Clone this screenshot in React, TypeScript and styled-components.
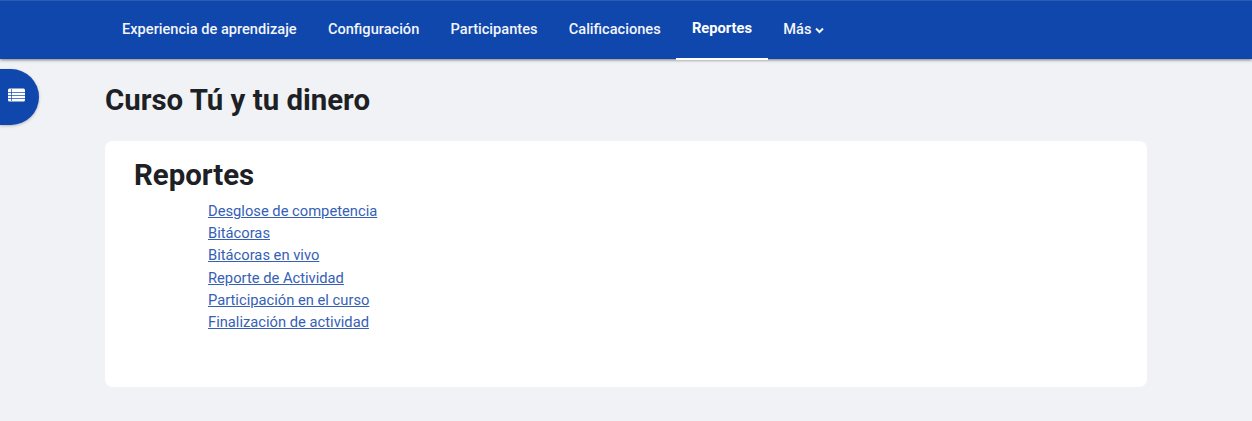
import React from 'react';
import styled, {createGlobalStyle} from 'styled-components';

const GlobalStyle = createGlobalStyle`
  html, body {
    margin: 0;
    padding: 0;
    background: #f1f2f6;
    font-family: Roboto, "Liberation Sans", sans-serif;
    color: #1d2125;
    overflow: hidden;
  }
`;

const Page = styled.div`
  position: relative;
  width: 1252px;
  height: 421px;
  background: #f1f2f6;
`;

const NavBar = styled.nav`
  height: 59px;
  box-sizing: border-box;
  display: flex;
  padding: 1px 0 0 106.4px;
  background: #0f47ad;
  border-top: 1px solid #2c5cb4;
  box-shadow: 0 1px 3px rgba(0, 0, 0, 0.5);
`;

const NavItem = styled.a<{$active?: boolean}>`
  display: flex;
  align-items: center;
  gap: 4px;
  box-sizing: border-box;
  height: 58px;
  padding: 0 15.65px ${p => (p.$active ? '4px' : '2px')};
  font-size: ${p => (p.$active ? '14.7px' : '14.6px')};
  font-weight: ${p => (p.$active ? 700 : 500)};
  color: #fff;
  opacity: ${p => (p.$active ? 1 : 0.95)};
  border-bottom: 2px solid ${p => (p.$active ? '#fff' : 'transparent')};
`;

const Chevron = styled.svg`
  width: 9px;
  height: 7px;
  margin-top: 3px;
`;

const DrawerToggle = styled.button`
  position: absolute;
  left: 0;
  top: 69px;
  width: 39px;
  height: 56px;
  padding: 0 0 4px 8px;
  display: flex;
  align-items: center;
  border: 0;
  border-radius: 0 28px 28px 0;
  background: #0f47ad;
  box-shadow: 0 1px 3px rgba(0, 0, 0, 0.25);
`;

const ListIcon = styled.svg`
  display: block;
  width: 17px;
  height: 14px;
`;

const Main = styled.main`
  width: 1042px;
  margin-left: 105px;
`;

const CourseTitle = styled.h1`
  margin: 0;
  padding-top: 22px;
  height: 60px;
  box-sizing: content-box;
  font-size: 29.4px;
  line-height: 38px;
  font-weight: 700;
`;

const Card = styled.section`
  height: 246px;
  box-sizing: border-box;
  padding: 16px 29px;
  background: #fff;
  border-radius: 8px;
`;

const CardTitle = styled.h2`
  margin: 0 0 7px;
  font-size: 29.4px;
  line-height: 36px;
  font-weight: 700;
`;

const LinkList = styled.ul`
  list-style: none;
  margin: 0;
  padding: 0 0 0 74px;
`;

const ReportLink = styled.a`
  display: block;
  font-size: 14.72px;
  line-height: 22.2px;
  color: #3560b6;
  text-decoration: underline;
`;

const navItems = ['Experiencia de aprendizaje', 'Configuración', 'Participantes', 'Calificaciones'];

const reports = [
  'Desglose de competencia',
  'Bitácoras',
  'Bitácoras en vivo',
  'Reporte de Actividad',
  'Participación en el curso',
  'Finalización de actividad',
];

export default function App() {
  return (
    <Page>
      <GlobalStyle />
      <NavBar>
        {navItems.map(item => (
          <NavItem key={item}>{item}</NavItem>
        ))}
        <NavItem $active>Reportes</NavItem>
        <NavItem>
          Más
          <Chevron viewBox="0 0 9 7">
            <path d="M1 1.5 L4.5 5 L8 1.5" fill="none" stroke="#fff" strokeWidth="2" />
          </Chevron>
        </NavItem>
      </NavBar>

      <DrawerToggle aria-label="Abrir índice">
        <ListIcon viewBox="0 0 17 14">
          <rect x="0" y="0.5" width="17" height="13" rx="1.5" fill="#fff" />
          <path d="M0 4.5 H17 M0 7.5 H17 M0 10.5 H17 M3.5 1 V13" stroke="#0f47ad" strokeWidth="0.7" />
        </ListIcon>
      </DrawerToggle>

      <Main>
        <CourseTitle>Curso Tú y tu dinero</CourseTitle>
        <Card>
          <CardTitle>Reportes</CardTitle>
          <LinkList>
            {reports.map(report => (
              <li key={report}>
                <ReportLink href="#">{report}</ReportLink>
              </li>
            ))}
          </LinkList>
        </Card>
      </Main>
    </Page>
  );
}
